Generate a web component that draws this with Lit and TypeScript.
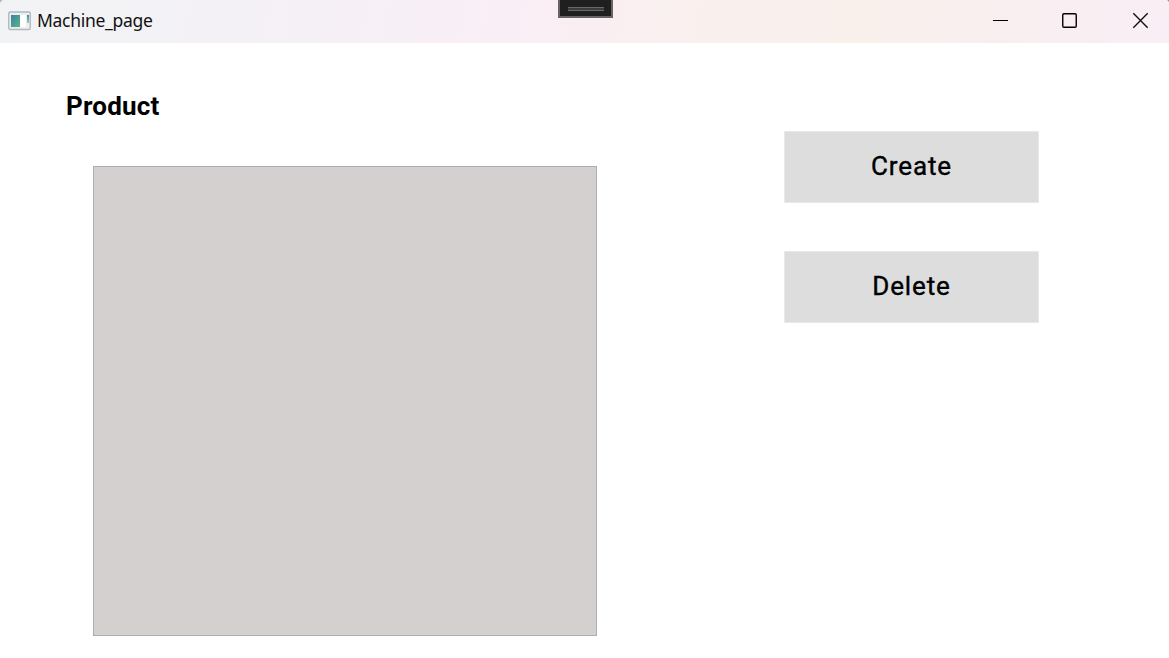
import { LitElement, html, css } from "lit";
import { customElement, property } from "lit/decorators.js";

@customElement("title-bar")
class TitleBar extends LitElement {
  @property() caption = "";

  static styles = css`
    :host {
      display: flex;
      align-items: center;
      position: relative;
      height: 43px;
      box-sizing: border-box;
      padding: 0 20px 2px 8px;
      background: radial-gradient(circle at 8px 8px, transparent 9px, #b4b7b9 10px) 0 0 / 8px 8px no-repeat,
        radial-gradient(circle at 0 4px, transparent 4px, #8d8587 5px) 100% 0 / 4px 4px no-repeat,
        linear-gradient(100deg, #f2f3f4 0, #f3f1f6 18%, #f9eef6 43%, #f9f0ee 60%, #f9f0ec 74%, #f9eef0 88%, #f8eef5 100%);
    }
    .app-icon { display: block; width: 23px; height: 20px; }
    .caption {
      margin: -1px 0 0 6px;
      font: 17.5px/24px "Noto Sans", sans-serif;
      letter-spacing: -0.3px;
      color: #111;
      flex: 1;
    }
    .controls { display: flex; gap: 53px; align-items: center; }
    .controls svg { display: block; width: 17px; height: 17px; }
    .controls .maximize { margin: 0 1px 0 -1px; }
    .grip {
      position: absolute;
      left: 558px;
      top: 0;
      width: 55px;
      height: 18px;
    }
  `;

  render() {
    return html`
      <svg class="app-icon" viewBox="0 0 23 20">
        <defs>
          <linearGradient id="pane" x1="0" y1="0" x2="1" y2="1">
            <stop offset="0" stop-color="#3b82a0" />
            <stop offset="1" stop-color="#5bb583" />
          </linearGradient>
          <linearGradient id="bar" x1="0" y1="0" x2="0" y2="1">
            <stop offset="0" stop-color="#43869a" />
            <stop offset="1" stop-color="#9fd0bd" />
          </linearGradient>
        </defs>
        <rect x="0.75" y="1" width="21.5" height="17.5" rx="1.5" fill="#eceff2" stroke="#b3b8c0" stroke-width="1.4" />
        <rect x="3" y="4" width="9" height="12" fill="url(#pane)" />
        <rect x="12.5" y="4" width="5.5" height="12" fill="#fff" />
        <rect x="19" y="4" width="2" height="8" fill="url(#bar)" />
      </svg>
      <span class="caption">${this.caption}</span>
      <div class="controls">
        <svg viewBox="0 0 17 17"><path d="M1 8.5H16" stroke="#000" /></svg>
        <svg class="maximize" viewBox="0 0 17 17"><rect x="1.75" y="1.75" width="13.5" height="13.5" rx="1.2" fill="none" stroke="#000" stroke-width="1.4" /></svg>
        <svg viewBox="0 0 17 17"><path d="M1.3 1.3 15.7 15.7M15.7 1.3 1.3 15.7" stroke="#111" stroke-width="1.4" /></svg>
      </div>
      <svg class="grip" viewBox="0 0 55 18">
        <rect width="55" height="18" fill="#686464" />
        <rect x="2" width="51" height="16" fill="#1f1f1f" />
        <rect x="10" y="7" width="36" height="4" fill="#686868" />
        <rect x="10" y="8" width="36" height="2" fill="#3c3c3c" />
      </svg>
    `;
  }
}

@customElement("app-root")
class AppRoot extends LitElement {
  static styles = css`
    :host {
      display: block;
      height: 658px;
      overflow: hidden;
      background: #fff;
      color: #000;
      font-family: Roboto, sans-serif;
    }
    .content { display: flex; align-items: flex-start; }
    .products { width: 784px; padding: 47px 0 0 66px; box-sizing: border-box; }
    h1 {
      margin: 0;
      font-size: 26px;
      line-height: 32px;
      font-weight: 700;
      letter-spacing: 0.2px;
    }
    .list {
      box-sizing: border-box;
      width: 504px;
      height: 470px;
      margin: 44px 0 0 27px;
      background: #d4d0cf;
      border: 1px solid #abadb3;
    }
    .actions { display: flex; flex-direction: column; gap: 48px; padding-top: 88px; }
    button {
      box-sizing: border-box;
      width: 255px;
      height: 72px;
      padding: 0 0 2px;
      border: 1px solid #e9e9e9;
      background: #ddd;
      color: #000;
      font: 400 26px/32px Roboto, sans-serif;
      letter-spacing: 0.85px;
      -webkit-text-stroke: 0.4px #000;
    }
  `;

  render() {
    return html`
      <title-bar caption="Machine_page"></title-bar>
      <main class="content">
        <section class="products">
          <h1>Product</h1>
          <div class="list"></div>
        </section>
        <div class="actions">
          <button>Create</button>
          <button>Delete</button>
        </div>
      </main>
    `;
  }
}
